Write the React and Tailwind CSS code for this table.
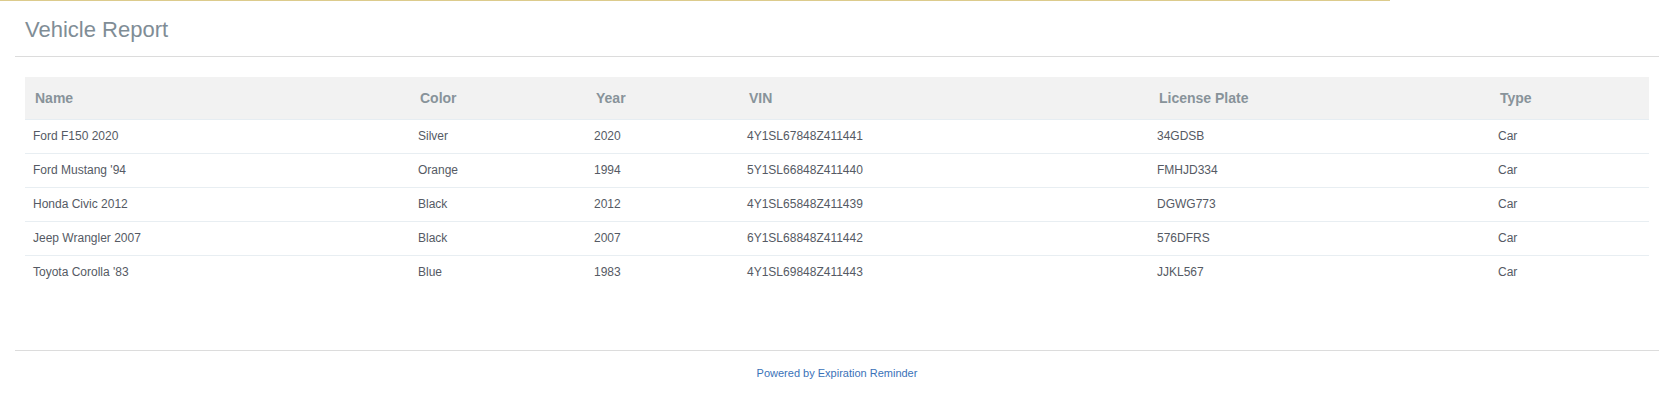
import React from "react";

const rows = [
  ["Ford F150 2020", "Silver", "2020", "4Y1SL67848Z411441", "34GDSB", "Car"],
  ["Ford Mustang '94", "Orange", "1994", "5Y1SL66848Z411440", "FMHJD334", "Car"],
  ["Honda Civic 2012", "Black", "2012", "4Y1SL65848Z411439", "DGWG773", "Car"],
  ["Jeep Wrangler 2007", "Black", "2007", "6Y1SL68848Z411442", "576DFRS", "Car"],
  ["Toyota Corolla '83", "Blue", "1983", "4Y1SL69848Z411443", "JJKL567", "Car"],
];

const headers = ["Name", "Color", "Year", "VIN", "License Plate", "Type"];
const widths = ["w-[385px]", "w-[176px]", "w-[153px]", "w-[410px]", "w-[341px]", "w-[159px]"];

export default function App() {
  return (
    <div className="w-[1675px] h-[399px] bg-white overflow-hidden font-['Liberation_Sans',Arial,sans-serif]">
      <div className="h-px w-[1390px] bg-[#dccb8c]" />
      <div className="pl-[15px] pr-[16px]">
        <div className="pl-[10px] pt-[17px]">
          <h1 className="text-[22px] leading-[24px] text-[#7f8d96] font-normal">Vehicle Report</h1>
        </div>
        <div className="mt-[14px] h-px bg-[#dcdcdc]" />
        <div className="px-[10px] pt-[20px]">
          <table className="w-[1624px] table-fixed border-collapse">
            <colgroup>
              {widths.map((w, i) => (
                <col key={i} className={w} />
              ))}
            </colgroup>
            <thead>
              <tr className="h-[42px] bg-[#f2f2f2] border-b border-[#e6edf2]">
                {headers.map((h) => (
                  <th key={h} className="text-left pl-[10px] pt-[2px] text-[14px] font-bold text-[#88939a] align-middle">
                    {h}
                  </th>
                ))}
              </tr>
            </thead>
            <tbody>
              {rows.map((r, i) => (
                <tr key={i} className={"h-[34px] " + (i > 0 ? "border-t border-[#e8eef2]" : "")}>
                  {r.map((c, j) => (
                    <td key={j} className="pl-[8px] text-[12px] text-[#555a64] align-middle">
                      {c}
                    </td>
                  ))}
                </tr>
              ))}
            </tbody>
          </table>
        </div>
        <div className="mt-[61px] h-px bg-[#dcdcdc]" />
        <div className="mt-[14px] text-center text-[11px] leading-[16px] text-[#3a72b8]">
          Powered by Expiration Reminder
        </div>
      </div>
    </div>
  );
}
